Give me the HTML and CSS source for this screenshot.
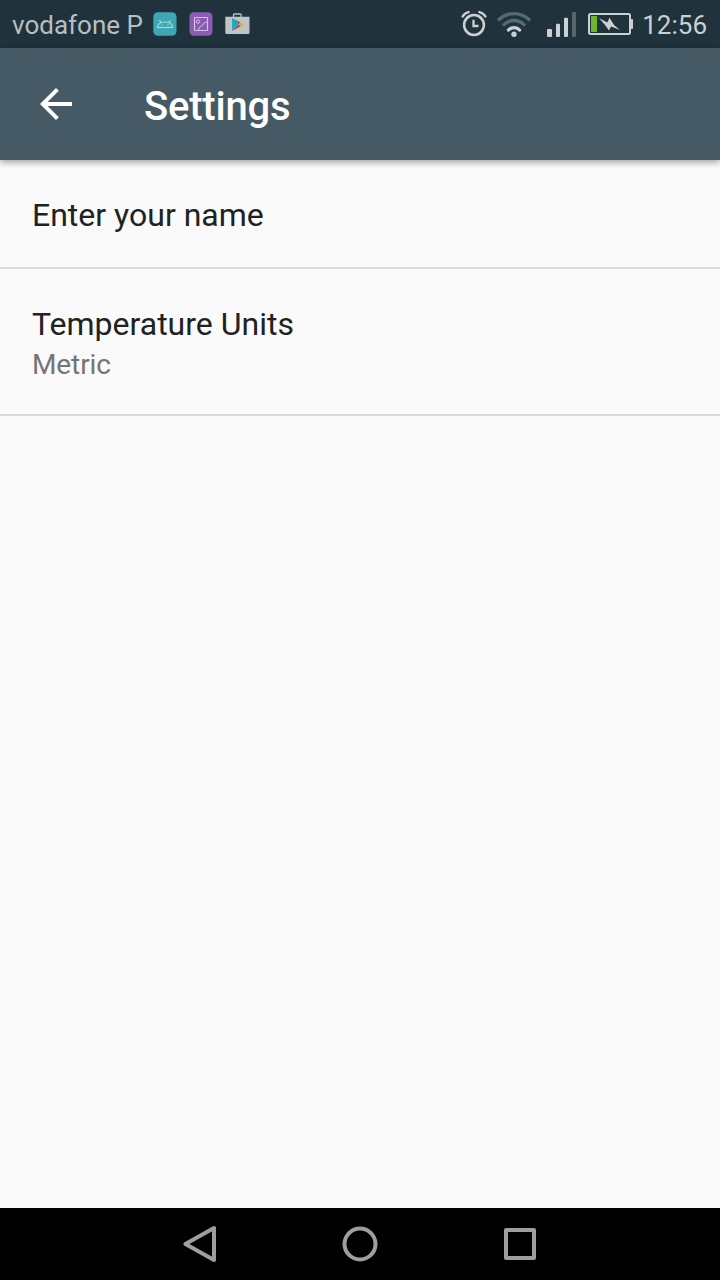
FILE: index.html
```html
<!DOCTYPE html>
<html lang="en">
<head>
<meta charset="utf-8">
<title>Settings</title>
<link rel="stylesheet" href="styles.css">
</head>
<body>
<div class="screen">
  <div class="status-bar">
    <span class="carrier">vodafone P</span>
    <div class="notifications">
      <svg width="24" height="24" viewBox="0 0 24 24">
        <rect x=".3" y=".3" width="23.2" height="23.4" rx="4.5" fill="#3da8b3"/>
        <path d="M4.500 15.500C4.800 11.700 8 10 12 10s7.200 1.700 7.500 5.500zM6.500 8l1.700 3M17.500 8l-1.700 3" fill="none" stroke="#b3dadd" stroke-width="1.100"/>
        <path d="M8.300 13h1.400M14.300 13h1.400" stroke="#b3dadd" stroke-width="1.200"/>
      </svg>
      <svg width="24" height="24" viewBox="0 0 24 24">
        <rect x=".5" y=".3" width="23" height="23.4" rx="4.500" fill="#8c5cb5"/>
        <rect x="5.500" y="5.500" width="13" height="13" rx=".5" fill="none" stroke="#d3c2e0" stroke-width="1.100"/>
        <circle cx="9" cy="9.600" r="1.700" fill="none" stroke="#d3c2e0"/>
        <path d="M9.500 18q.5-3.500 3-4 1.500-.5 2.200-2.500 1-1.300 3.500-1.300" fill="none" stroke="#d3c2e0"/>
      </svg>
      <svg width="25" height="24" viewBox="0 0 25 24">
        <path d="M8.500 5V3.200Q8.500 2 9.700 2h5.300q1.200 0 1.200 1.200V5" fill="none" stroke="#bfc4c5" stroke-width="1.300"/>
        <path d="M.3 4.700h24.200V20.500q0 1.500-1.500 1.500H1.800Q.3 22 .3 20.500z" fill="#bfc4c5"/>
        <path d="M7 6v13l6.500-6.500z" fill="#20a9cf"/>
        <path d="M7 6l8.600 4.600-2.100 1.900z" fill="#249a7c"/>
        <path d="M13.500 12.500l2.100-1.900 3.200 1.900-3.200 1.900z" fill="#d8b02a"/>
        <path d="M7 19l6.500-6.500 2.100 1.900z" fill="#c63e50"/>
      </svg>
    </div>
    <div class="system-icons">
      <svg class="alarm" width="26" height="28" viewBox="0 0 26 28">
        <circle cx="13" cy="15" r="9.900" fill="none" stroke="#cbd0d2" stroke-width="2.500"/>
        <path d="M12.500 9.800v6.200h5" fill="none" stroke="#cbd0d2" stroke-width="2.300"/>
        <path d="M1.700 6.400Q3.600 3 7.500 2.100M24.300 6.400Q22.400 3 18.500 2.100" fill="none" stroke="#cbd0d2" stroke-width="2.500" stroke-linecap="round"/>
      </svg>
      <svg class="wifi" width="34" height="28" viewBox="0 0 34 28">
        <g fill="none" stroke-width="3.400" stroke-linecap="round">
          <path d="M2 9.600Q8.500 3.600 17 3.600t15 6M7 14.600Q11.200 10.500 17 10.500t10 4.100" stroke="#566a72"/>
          <path d="M11.500 20Q13.600 17.600 17 17.600t5.500 2.400" stroke="#cbd0d2"/>
        </g>
        <circle cx="17" cy="24.300" r="2.700" fill="#cbd0d2"/>
      </svg>
      <svg class="signal" width="30" height="28" viewBox="0 0 30 28">
        <g fill="#cbd0d2">
          <rect x="0" y="19" width="5" height="8" rx="1"/>
          <rect x="9" y="13.700" width="4" height="13.300" rx="1"/>
          <rect x="17" y="7.700" width="4" height="19.300" rx="1"/>
        </g>
        <rect x="25" y="2" width="4" height="25" rx="1" fill="#55676e"/>
      </svg>
      <svg class="battery" width="45" height="28" viewBox="0 0 45 28">
        <rect x="1" y="4" width="41" height="20" rx="1.500" fill="none" stroke="#cbd0d2" stroke-width="2"/>
        <path d="M43 9h1q1 0 1 1v8q0 1-1 1h-1z" fill="#cbd0d2"/>
        <rect x="3" y="6" width="6" height="16" fill="#6fb42c"/>
        <path d="M11 8l8.300 4.500 2.200-4.700 4.500 7.200 6 5-9-3.500-2 4-4-5.500z" fill="#cbd0d2"/>
      </svg>
    </div>
    <span class="clock">12:56</span>
  </div>

  <header class="app-bar">
    <svg class="back" width="32" height="32" viewBox="0 0 32 32">
      <path d="M32 14H7.700L18.800 2.800 16 0 0 16l16 16 2.800-2.800L7.700 18H32z" fill="#fff"/>
    </svg>
    <h1 class="title">Settings</h1>
  </header>

  <main class="preferences">
    <div class="preference">
      <div class="label">Enter your name</div>
    </div>
    <div class="preference">
      <div class="label">Temperature Units</div>
      <div class="summary">Metric</div>
    </div>
  </main>

  <nav class="nav-bar">
    <svg width="40" height="40" viewBox="0 0 40 40"><path d="M34 4v32L5.400 20z"/></svg>
    <svg width="40" height="40" viewBox="0 0 40 40"><circle cx="20" cy="20" r="15.500"/></svg>
    <svg width="40" height="40" viewBox="0 0 40 40"><rect x="6" y="6" width="28" height="28"/></svg>
  </nav>
</div>
</body>
</html>
```
FILE: styles.css
```css
body {
  margin: 0;
  font-family: Roboto, sans-serif;
}

svg {
  display: block;
  flex: none;
}

.screen {
  display: flex;
  flex-direction: column;
  width: 720px;
  height: 1280px;
  overflow: hidden;
  background: #fafafa;
}

.status-bar {
  display: flex;
  align-items: center;
  box-sizing: border-box;
  height: 48px;
  padding: 0 13px 0 12px;
  background: #20333c;
  color: #b8bec1;
  font-size: 26px;
  line-height: 30px;
}

.carrier {
  width: 141px;
  padding-top: 2px;
  white-space: nowrap;
}

.notifications {
  display: flex;
  gap: 12px;
}

.system-icons {
  display: flex;
  margin-left: auto;
}

.wifi {
  margin-left: 10px;
}

.signal {
  margin-left: 16px;
}

.battery {
  margin-left: 11px;
}

.clock {
  width: 66px;
  margin-left: 8px;
  padding-top: 2px;
  color: #cbd0d2;
  text-align: right;
}

.app-bar {
  display: flex;
  align-items: center;
  box-sizing: border-box;
  height: 112px;
  padding-left: 40px;
  background: #455a64;
  box-shadow: 0 2px 7px rgba(0, 0, 0, 0.4);
}

.title {
  margin: 0 0 0 72px;
  padding-top: 6px;
  color: #fff;
  font-size: 40px;
  font-weight: 500;
  line-height: 48px;
  letter-spacing: -0.2px;
}

.preferences {
  flex: 1;
}

.preference {
  padding: 36px 32px 33px;
  border-bottom: 2px solid #dadada;
}

.label {
  color: #212121;
  font-size: 32px;
  line-height: 38px;
}

.summary {
  height: 33px;
  padding-top: 5px;
  color: #757575;
  font-size: 28px;
  line-height: 34px;
  letter-spacing: -0.1px;
}

.nav-bar {
  display: flex;
  align-items: center;
  justify-content: center;
  gap: 120px;
  height: 72px;
  background: #000;
  fill: none;
  stroke: #9e9e9e;
  stroke-width: 4px;
  stroke-linejoin: round;
}
```
